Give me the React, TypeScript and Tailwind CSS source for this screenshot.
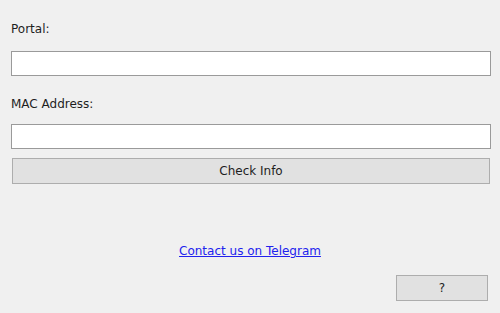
export default function App() {
  return (
    <div className="w-[500px] h-[313px] bg-[#f0f0f0] flex flex-col px-[11px] pt-[20px] text-[12px] text-[#1e1e1e] font-['DejaVu_Sans',sans-serif]">
      <label className="h-[18px] leading-[18px]">Portal:</label>
      <input
        type="text"
        className="mt-[13px] h-[25px] w-[480px] bg-white border border-[#9a9a9a] outline-none px-1"
      />
      <label className="mt-[19px] h-[18px] leading-[18px]">MAC Address:</label>
      <input
        type="text"
        className="mt-[11px] h-[25px] w-[480px] bg-white border border-[#9a9a9a] outline-none px-1"
      />
      <button className="mt-[9px] ml-[1px] h-[26px] w-[478px] bg-[#e1e1e1] border border-[#adadad] text-[#1e1e1e]">
        Check Info
      </button>
      <div className="mt-[59px] flex justify-center">
        <a href="#" className="text-[#2222ee] underline leading-[16px]">
          Contact us on Telegram
        </a>
      </div>
      <div className="mt-[16px] flex justify-end pr-[1px]">
        <button className="h-[26px] w-[92px] bg-[#e1e1e1] border border-[#adadad] text-[#1e1e1e]">
          ?
        </button>
      </div>
    </div>
  )
}
